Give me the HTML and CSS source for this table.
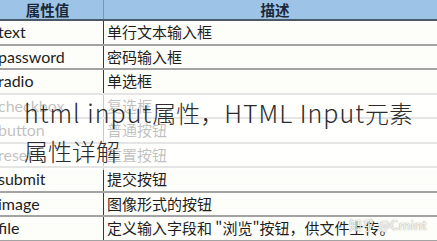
FILE: index.html
```html
<!DOCTYPE html>
<html lang="zh">
<head>
<meta charset="utf-8">
<title>html input属性</title>
<link rel="stylesheet" href="styles.css">
</head>
<body>
<div class="frame">
  <div class="table">
    <div class="row head"><div class="c1">属性值</div><div class="c2">描述</div></div>
    <div class="row"><div class="c1">text</div><div class="c2">单行文本输入框</div></div>
    <div class="row"><div class="c1">password</div><div class="c2">密码输入框</div></div>
    <div class="row"><div class="c1">radio</div><div class="c2">单选框</div></div>
    <div class="row"><div class="c1">checkbox</div><div class="c2">复选框</div></div>
    <div class="row"><div class="c1">button</div><div class="c2">普通按钮</div></div>
    <div class="row"><div class="c1">reset</div><div class="c2">重置按钮</div></div>
    <div class="row"><div class="c1">submit</div><div class="c2">提交按钮</div></div>
    <div class="row"><div class="c1">image</div><div class="c2">图像形式的按钮</div></div>
    <div class="row"><div class="c1">file</div><div class="c2">定义输入字段和 "浏览"按钮，供文件上传。</div></div>
  </div>
  <div class="overlay"><span class="lat">html input</span>属性，<span class="lat">HTML Input</span>元素<br>属性详解</div>
  <div class="mark">知乎 @Cmint</div>
</div>
</body>
</html>
```
FILE: styles.css
```css
html, body { margin: 0; padding: 0; background: #fff; }
.frame { position: relative; width: 437px; height: 241px; overflow: hidden; }
.table { margin-left: -8px; width: 454px; }
.row {
  display: grid;
  grid-template-columns: 112px 342px;
  height: 24.5px;
  box-sizing: border-box;
  border-bottom: 2px solid #a3a3a3;
  background: #fdfdfa;
}
.row .c1 {
  border-right: 1px solid #3a3a3a;
  padding-left: 6px;
  font-family: Lato, "Open Sans", sans-serif;
  font-size: 16px;
  line-height: 22px;
  color: #1e1e1e;
}
.row .c2 {
  padding-left: 3px;
  font-family: "Noto Sans CJK SC", sans-serif;
  font-size: 15px;
  line-height: 22px;
  color: #1e1e1e;
  white-space: nowrap;
}
.row.head {
  height: 21px;
  background: #9dc3e6;
  border-bottom: 2px solid #4a5868;
}
.row.head .c1, .row.head .c2 {
  font-family: "Noto Sans CJK SC", sans-serif;
  font-weight: bold;
  font-size: 14.5px;
  line-height: 19px;
  text-align: center;
  padding: 0;
  color: #1b2838;
}
.row.head .c1 { border-right: 1px solid #7f97ad; }
.overlay {
  position: absolute;
  left: 0; top: 93px;
  width: 437px; height: 77px;
  box-sizing: border-box;
  padding-left: 24px;
  background: rgba(255,255,255,0.72);
  font-family: "Noto Sans CJK SC", sans-serif;
  font-weight: 300;
  font-size: 24px;
  line-height: 38px;
  color: #2b2b2b;
  white-space: nowrap;
}
.overlay .lat {
  font-size: 25px;
  letter-spacing: 1px;
}
.mark {
  position: absolute;
  left: 349px; top: 215px;
  font-family: "Noto Sans CJK SC", sans-serif;
  font-size: 13px;
  color: rgba(255,255,255,0.9);
  text-shadow: 0 0 1px rgba(0,0,0,0.35), 0 0 2px rgba(0,0,0,0.2);
  white-space: nowrap;
}
```
